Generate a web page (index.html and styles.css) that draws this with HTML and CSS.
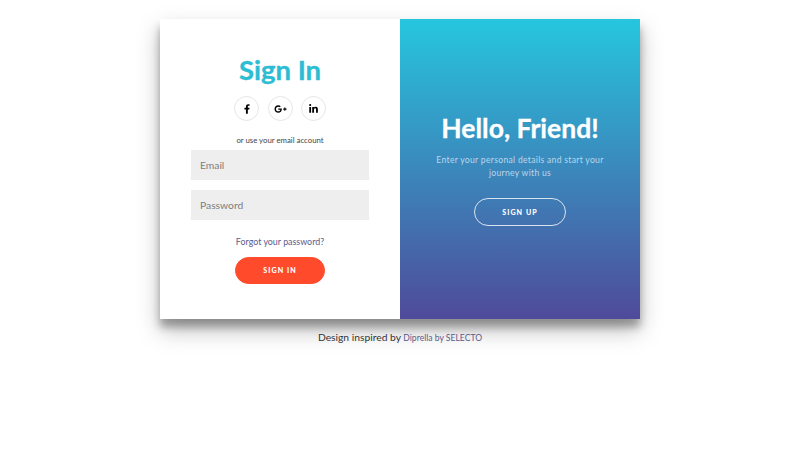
FILE: index.html
```html
<!DOCTYPE html>
<html lang="en">
<head>
<meta charset="utf-8">
<title>Sign In</title>
<link rel="stylesheet" href="styles.css">
</head>
<body>
<main class="card">
  <form class="pane pane-form">
    <h1 class="title title-teal">Sign In</h1>
    <div class="socials">
      <a class="social"><svg class="ic-f" viewBox="0 0 320 512"><path d="M279.14 288l14.22-92.66h-88.91v-60.13c0-25.35 12.42-50.06 52.24-50.06h40.42V6.26S260.43 0 225.36 0c-73.22 0-121.08 44.38-121.08 124.72v70.62H22.89V288h81.39v224h100.17V288z"/></svg></a>
      <a class="social"><svg class="ic-g" viewBox="0 0 640 512"><path d="M386.061 228.496c1.834 9.692 3.143 19.384 3.143 31.956C389.204 370.205 315.599 448 204.8 448c-106.084 0-192-85.915-192-192s85.916-192 192-192c51.864 0 95.083 18.859 128.611 50.292l-52.126 50.03c-14.145-13.621-39.028-29.599-76.485-29.599-65.484 0-118.92 54.221-118.92 121.277 0 67.056 53.436 121.277 118.92 121.277 75.961 0 104.513-54.745 108.965-82.773H204.8v-66.009h181.261zm185.406 6.437V179.2h-56.001v55.733h-55.733v56.001h55.733v55.733h56.001v-55.733H627.2v-56.001h-55.733z"/></svg></a>
      <a class="social"><svg class="ic-in" viewBox="0 0 448 512"><path d="M100.28 448H7.4V148.9h92.88zM53.79 108.1C24.09 108.1 0 83.5 0 53.8a53.79 53.79 0 0 1 107.58 0c0 29.7-24.1 54.3-53.79 54.3zM447.9 448h-92.68V302.4c0-34.7-.7-79.2-48.29-79.2-48.29 0-55.69 37.7-55.69 76.7V448h-92.78V148.9h89.08v40.8h1.3c12.4-23.5 42.69-48.3 87.88-48.3 94 0 111.28 61.9 111.28 142.3V448z"/></svg></a>
    </div>
    <span class="hint">or use your email account</span>
    <input class="field" type="email" placeholder="Email">
    <input class="field" type="password" placeholder="Password">
    <a class="forgot">Forgot your password?</a>
    <button class="btn btn-solid" type="button">Sign In</button>
  </form>
  <section class="pane pane-hello">
    <h1 class="title title-white">Hello, Friend!</h1>
    <p class="lead">Enter your personal details and start your journey with us</p>
    <button class="btn btn-ghost" type="button">Sign Up</button>
  </section>
</main>
<footer class="credit">Design inspired by <a class="credit-link">Diprella by SELECTO</a></footer>
</body>
</html>
```
FILE: styles.css
```css
* { box-sizing: border-box; }
html, body { margin: 0; height: 100%; }
body {
  background: #fff;
  display: flex;
  flex-direction: column;
  align-items: center;
  padding-top: 19px;
  font-family: Lato, "Open Sans", sans-serif;
  color: #333;
}
.card {
  width: 480px;
  height: 300px;
  display: flex;
  background: #fff;
  box-shadow: 0 11px 22px rgba(0,0,0,.25), 0 8px 8px rgba(0,0,0,.3);
}
.pane {
  width: 240px;
  display: flex;
  flex-direction: column;
  align-items: center;
}
.pane-form { padding: 32px 31px 0; }
.pane-hello {
  padding-top: 90px;
  background: linear-gradient(to bottom, #26c6de, #4f4a9a);
  color: #fff;
}
.title { margin: 0; font-weight: 700; line-height: 38px; -webkit-text-stroke: .3px currentColor; }
.title-teal { font-size: 27.5px; color: #2cbdd4; }
.title-white { font-size: 26.5px; }
.socials { display: flex; gap: 8.5px; margin-top: 7px; }
.social {
  width: 25px;
  height: 25px;
  border: 1px solid #e6e6e6;
  border-radius: 50%;
  display: flex;
  align-items: center;
  justify-content: center;
}
.social svg { display: block; fill: #000; }
.ic-f { width: 6px; height: 10px; }
.ic-g { width: 13px; height: 10px; }
.ic-in { width: 9px; height: 10px; }
.hint { margin-top: 13px; font-size: 7.8px; line-height: 12px; color: #444; }
.field {
  width: 178px;
  height: 30px;
  flex: none;
  border: 0;
  background: #eee;
  padding: 0 9px;
  font: 10.3px Lato, sans-serif;
  margin-top: 4px;
}
.field + .field { margin-top: 10px; }
.field::placeholder { color: #7d7d7d; opacity: 1; }
.forgot { margin-top: 15px; font-size: 8.9px; line-height: 14px; color: #5a5a8c; }
.btn {
  width: 90px;
  height: 27px;
  border-radius: 14px;
  font: 900 7.1px Lato, sans-serif;
  letter-spacing: 1.05px;
  text-transform: uppercase;
  color: #fff;
  padding: 0;
}
.btn-solid { margin-top: 8px; background: #ff4b2b; border: 1px solid #ff4b2b; }
.btn-ghost { margin-top: 18px; background: transparent; border: 1px solid rgba(255,255,255,.8); width: 92px; height: 28px; }
.lead {
  margin: 7px 0 0;
  width: 180px;
  text-align: center;
  font-size: 8.6px;
  line-height: 13px;
  font-weight: 400;
  letter-spacing: .3px;
  color: #bcd6ea;
}
.credit { margin-top: 11px; font-size: 10.3px; line-height: 14px; color: #333; }
.credit-link { font-size: 8.6px; color: #5a5a8c; }
```
